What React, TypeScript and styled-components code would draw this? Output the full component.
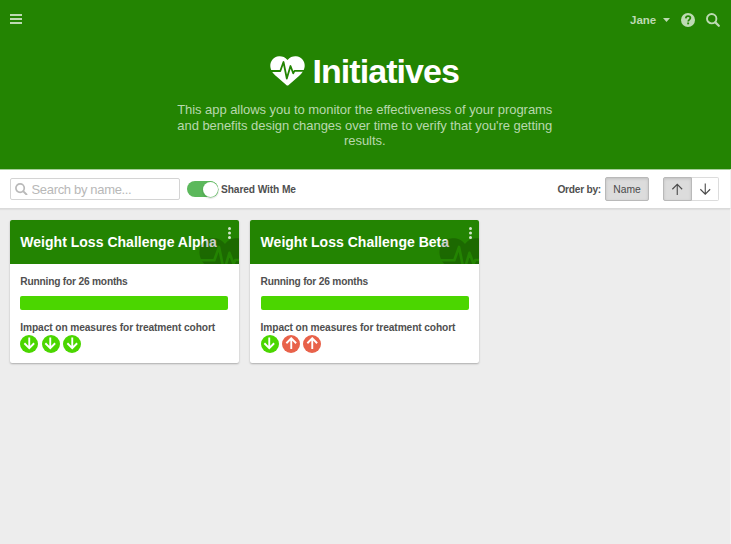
import React from 'react';
import styled, { createGlobalStyle } from 'styled-components';

const GlobalStyle = createGlobalStyle`
  *, *::before, *::after { box-sizing: border-box; }
  body {
    margin: 0;
    background: #ededed;
    color: #505050;
    font-family: "Liberation Sans", Arial, Helvetica, sans-serif;
    overflow: hidden;
  }
  button, input { font-family: inherit; }
  svg { display: block; flex: none; }
`;

const Page = styled.div`
  height: 544px;
  display: flex;
  flex-direction: column;
`;

const Hero = styled.header`
  height: 169px;
  flex: none;
  background: #238402;
  color: #fff;
`;

const TopBar = styled.div`
  height: 39px;
  padding: 0 11px 0 10px;
  display: flex;
  align-items: center;
  justify-content: space-between;
  color: #bddab3;
`;

const IconButton = styled.button<{ $gap?: number }>`
  border: 0;
  padding: 0;
  margin: 0 0 0 ${p => p.$gap ?? 0}px;
  background: none;
  color: inherit;
  display: flex;
`;

const Account = styled.div`
  display: flex;
  align-items: center;
  padding-top: 1px;
`;

const UserName = styled.span`
  font-size: 11.5px;
  line-height: 16px;
  font-weight: bold;
  width: 26px;
`;

const Caret = styled.span`
  width: 7px;
  height: 4px;
  margin: 0 11px 0 7px;
  background: currentColor;
  clip-path: polygon(0 0, 100% 0, 50% 100%);
`;

const TitleRow = styled.div`
  margin-top: 11px;
  height: 42px;
  display: flex;
  align-items: center;
  padding-left: 269.5px;
  gap: 8px;
`;

const Title = styled.h1`
  margin: 0;
  font-size: 34px;
  line-height: 42px;
  letter-spacing: -0.95px;
  font-weight: bold;
`;

const Lead = styled.p`
  margin: 10px auto 0;
  padding-right: 1.5px;
  width: 400px;
  font-size: 13px;
  line-height: 15.6px;
  text-align: center;
  color: #b8d8ae;
`;

const LeadLine = styled.span`
  display: block;
  white-space: nowrap;
  letter-spacing: -0.05px;
`;

const Toolbar = styled.div`
  height: 40px;
  flex: none;
  padding: 0 11px 0 10px;
  display: flex;
  align-items: center;
  background: #fff;
  border-top: 1px solid #a5cd9a;
  border-right: 1px solid #f3f3f3;
  border-bottom: 1px solid #dadada;
  box-shadow: 0 1px 1px rgba(0, 0, 0, 0.05);
`;

const SearchBox = styled.label`
  width: 170px;
  height: 22px;
  padding-left: 4px;
  display: flex;
  align-items: center;
  gap: 4px;
  border: 1px solid #d4d4d4;
  border-radius: 2px;
  color: #b9b9b9;
`;

const SearchInput = styled.input`
  width: 140px;
  height: 20px;
  padding: 0;
  border: 0;
  outline: 0;
  background: none;
  font-size: 13px;
  letter-spacing: -0.33px;
  color: #505050;
  &::placeholder { color: #b8b8b8; opacity: 1; }
`;

const Switch = styled.span`
  width: 31px;
  height: 16px;
  margin: 0 3px 0 7px;
  display: flex;
  justify-content: flex-end;
  align-items: center;
  border-radius: 8px;
  background: #5cb85c;
`;

const Knob = styled.span`
  width: 15px;
  height: 15px;
  margin-right: 0.5px;
  border-radius: 50%;
  background: #fff;
  box-shadow: 0 0 0 0.5px #5cb85c, 0 1px 1px 1px rgba(0, 0, 0, 0.1);
`;

const Label = styled.span<{ $spacing?: number }>`
  font-size: 10.2px;
  line-height: 14px;
  font-weight: bold;
  letter-spacing: ${p => p.$spacing ?? -0.1}px;
  white-space: nowrap;
`;

const ToolbarLabel = styled(Label)`
  padding-top: 1px;
`;

const Ordering = styled.div`
  margin-left: auto;
  display: flex;
  align-items: center;
`;

const ButtonGroup = styled.div<{ $gap: number }>`
  display: flex;
  margin-left: ${p => p.$gap}px;
`;

const ToolButton = styled.button<{ $width: number; $active?: boolean }>`
  width: ${p => p.$width}px;
  height: 24px;
  padding: 0;
  display: flex;
  align-items: center;
  justify-content: center;
  font-size: 10.3px;
  color: #4a4a4a;
  background: ${p => (p.$active ? '#dcdcdc' : '#fff')};
  border: 1px solid ${p => (p.$active ? '#b9b9b9' : '#dcdcdc')};
  border-radius: 2px;
  box-shadow: ${p => (p.$active ? 'inset 0 1px 3px rgba(0, 0, 0, 0.13)' : 'none')};
  &:first-child:not(:last-child) { border-radius: 2px 0 0 2px; }
  &:last-child:not(:first-child) { border-left: 0; border-radius: 0 2px 2px 0; }
`;

const CardGrid = styled.main`
  flex: 1;
  display: flex;
  align-items: flex-start;
  gap: 11.3px;
  padding: 11px 9.8px;
  border-right: 1px solid #f3f3f3;
`;

const Card = styled.article`
  width: 229px;
  height: 143px;
  border-radius: 2px;
  background: #fff;
  box-shadow: 0 1px 2px rgba(0, 0, 0, 0.28);
`;

const CardHeader = styled.div`
  position: relative;
  height: 44px;
  padding: 0 0 1px 10.5px;
  display: flex;
  align-items: center;
  overflow: hidden;
  border-radius: 2px 2px 0 0;
  background: #238402;
`;

const CardTitle = styled.h2`
  margin: 0;
  font-size: 14px;
  line-height: 18px;
  letter-spacing: 0.02px;
  white-space: nowrap;
  color: #fff;
`;

const Watermark = styled.span`
  position: absolute;
  left: 189px;
  top: 18px;
  opacity: 0.2;
  color: #000;
`;

const MenuDots = styled.span`
  position: absolute;
  right: 7.5px;
  top: 6.5px;
  color: #d3e6cd;
`;

const CardBody = styled.div`
  padding: 11px 10.5px 0;
  display: flex;
  flex-direction: column;
`;

const Progress = styled.div`
  height: 14px;
  margin: 7px 0 11px;
  border-radius: 2px;
  background: #4bd600;
`;

const Impacts = styled.div`
  display: flex;
  gap: 3.3px;
  margin-top: -0.5px;
`;

const Impact = styled.span<{ $bad?: boolean }>`
  width: 18px;
  height: 18px;
  border-radius: 50%;
  display: flex;
  align-items: center;
  justify-content: center;
  color: #fff;
  background: ${p => (p.$bad ? '#e8624a' : '#4bd600')};
`;

const HeartPulse = ({ width, line }: { width: number; line: string }) => (
  <svg width={width} height={(width * 30) / 35} viewBox="0 0 35 30">
    <path fill="currentColor" d="M17.5 4C20 .9 23 0 26 .2 31.5.7 35 5 34.7 10c-.2 4.500-3 7.500-6 10.300L18.700 29q-1.200 1-2.400 0L6.300 20.300C3 17.300.500 14.500.300 10 .100 5 3.500.700 9 .200 12 0 15 .900 17.500 4Z" />
    <path fill="none" stroke={line} strokeWidth="1.800" strokeLinejoin="round" d="M0 15h10.300L13.500 6l3.300 16.500 3.700-12.500 2.700 7.300 1.300-2.500H35" />
  </svg>
);

const SearchIcon = ({ size }: { size: number }) => (
  <svg width={size} height={size} viewBox="0 0 14 14" fill="none" stroke="currentColor" strokeLinecap="round">
    <circle cx="5.700" cy="5.700" r="4.700" strokeWidth="1.900" />
    <path d="M9.400 9.400 12.800 12.800" strokeWidth="2.200" />
  </svg>
);

const Arrow = ({ up, width, weight }: { up?: boolean; width: number; weight: number }) => (
  <svg width={width} height={width} viewBox="0 0 12 12" fill="none" stroke="currentColor" strokeWidth={weight}>
    <path d={up ? 'M6 11.500V1.200M1.300 6 6 1.200 10.700 6' : 'M6 .500V10.800M1.300 6 6 10.800 10.700 6'} />
  </svg>
);

const initiatives = [
  { name: 'Weight Loss Challenge Alpha', impacts: ['down', 'down', 'down'] },
  { name: 'Weight Loss Challenge Beta', impacts: ['down', 'up', 'up'] },
];

export default function App() {
  return (
    <Page>
      <GlobalStyle />
      <Hero>
        <TopBar>
          <IconButton aria-label="Menu">
            <svg width="12" height="11" viewBox="0 0 12 11" fill="currentColor">
              <path d="M0 0h12v2H0zM0 4h12v2H0zM0 8h12v2H0z" />
            </svg>
          </IconButton>
          <Account>
            <UserName>Jane</UserName>
            <Caret />
            <IconButton aria-label="Help">
              <svg width="14" height="14" viewBox="0 0 14 14">
                <circle cx="7" cy="7" r="7" fill="currentColor" />
                <path d="M4.800 5.400C4.900 3.900 5.800 3.200 7.100 3.200c1.400 0 2.300.800 2.300 1.900C9.400 6.600 7.200 6.600 7.200 8.500" fill="none" stroke="#238402" strokeWidth="1.700" />
                <path d="M6.200 9.500H8.100v1.800H6.200z" fill="#238402" />
              </svg>
            </IconButton>
            <IconButton aria-label="Search" $gap={11}>
              <SearchIcon size={14} />
            </IconButton>
          </Account>
        </TopBar>
        <TitleRow>
          <HeartPulse width={35} line="#238402" />
          <Title>Initiatives</Title>
        </TitleRow>
        <Lead>
          <LeadLine>This app allows you to monitor the effectiveness of your programs</LeadLine>
          <LeadLine>and benefits design changes over time to verify that you're getting</LeadLine>
          <LeadLine>results.</LeadLine>
        </Lead>
      </Hero>
      <Toolbar>
        <SearchBox>
          <SearchIcon size={12.5} />
          <SearchInput placeholder="Search by name..." />
        </SearchBox>
        <Switch><Knob /></Switch>
        <ToolbarLabel>Shared With Me</ToolbarLabel>
        <Ordering>
          <ToolbarLabel $spacing={-0.25}>Order by:</ToolbarLabel>
          <ButtonGroup $gap={4}>
            <ToolButton $width={44} $active>Name</ToolButton>
          </ButtonGroup>
          <ButtonGroup $gap={14}>
            <ToolButton $width={29} $active aria-label="Ascending"><Arrow up width={12.5} weight={1.05} /></ToolButton>
            <ToolButton $width={27} aria-label="Descending"><Arrow width={12.5} weight={1.05} /></ToolButton>
          </ButtonGroup>
        </Ordering>
      </Toolbar>
      <CardGrid>
        {initiatives.map(item => (
          <Card key={item.name}>
            <CardHeader>
              <CardTitle>{item.name}</CardTitle>
              <Watermark><HeartPulse width={52} line="#238402" /></Watermark>
              <MenuDots>
                <svg width="3" height="12" viewBox="0 0 3 12" fill="currentColor">
                  <circle cx="1.500" cy="1.500" r="1.500" />
                  <circle cx="1.500" cy="6" r="1.500" />
                  <circle cx="1.500" cy="10.500" r="1.500" />
                </svg>
              </MenuDots>
            </CardHeader>
            <CardBody>
              <Label $spacing={-0.2}>Running for 26 months</Label>
              <Progress />
              <Label>Impact on measures for treatment cohort</Label>
              <Impacts>
                {item.impacts.map((direction, i) => (
                  <Impact key={i} $bad={direction === 'up'}>
                    <Arrow up={direction === 'up'} width={12.5} weight={1.8} />
                  </Impact>
                ))}
              </Impacts>
            </CardBody>
          </Card>
        ))}
      </CardGrid>
    </Page>
  );
}
